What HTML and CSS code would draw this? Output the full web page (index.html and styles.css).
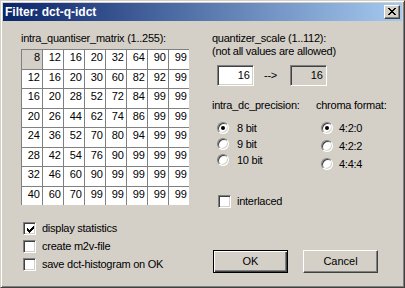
FILE: index.html
```html
<!DOCTYPE html>
<html lang="en">
<head>
  <meta charset="UTF-8">
  <title>Filter: dct-q-idct</title>
  <link rel="stylesheet" href="styles.css">
</head>
<body>
  <div class="window">
    <div class="titlebar">
      <span class="title">Filter: dct-q-idct</span>
      <span class="close-btn">
        <svg width="8" height="7" viewBox="0 0 8 7" shape-rendering="crispEdges">
          <path d="M0 0h2v1h-2zM6 0h2v1h-2zM1 1h2v1h-2zM5 1h2v1h-2zM2 2h4v1h-4zM3 3h2v1h-2zM2 4h4v1h-4zM1 5h2v1h-2zM5 5h2v1h-2zM0 6h2v1h-2zM6 6h2v1h-2z" fill="#000"/>
        </svg>
      </span>
    </div>

    <div class="dialog">
      <div class="col-left">
        <div class="label">intra_quantiser_matrix (1..255):</div>
        <div class="matrix">
          <div class="cell cell-first">8</div><div class="cell">12</div><div class="cell">16</div><div class="cell">20</div><div class="cell">32</div><div class="cell">64</div><div class="cell">90</div><div class="cell">99</div>
          <div class="cell">12</div><div class="cell">16</div><div class="cell">20</div><div class="cell">30</div><div class="cell">60</div><div class="cell">82</div><div class="cell">92</div><div class="cell">99</div>
          <div class="cell">16</div><div class="cell">20</div><div class="cell">28</div><div class="cell">52</div><div class="cell">72</div><div class="cell">84</div><div class="cell">99</div><div class="cell">99</div>
          <div class="cell">20</div><div class="cell">26</div><div class="cell">44</div><div class="cell">62</div><div class="cell">74</div><div class="cell">86</div><div class="cell">99</div><div class="cell">99</div>
          <div class="cell">24</div><div class="cell">36</div><div class="cell">52</div><div class="cell">70</div><div class="cell">80</div><div class="cell">94</div><div class="cell">99</div><div class="cell">99</div>
          <div class="cell">28</div><div class="cell">42</div><div class="cell">54</div><div class="cell">76</div><div class="cell">90</div><div class="cell">99</div><div class="cell">99</div><div class="cell">99</div>
          <div class="cell">32</div><div class="cell">46</div><div class="cell">60</div><div class="cell">90</div><div class="cell">99</div><div class="cell">99</div><div class="cell">99</div><div class="cell">99</div>
          <div class="cell">40</div><div class="cell">60</div><div class="cell">70</div><div class="cell">99</div><div class="cell">99</div><div class="cell">99</div><div class="cell">99</div><div class="cell">99</div>
        </div>

        <div class="options">
          <div class="check">
            <span class="box">
              <svg width="7" height="7" viewBox="0 0 7 7" shape-rendering="crispEdges"><path d="M6 0h1v1h-1zM5 1h2v1h-2zM0 2h1v1h-1zM4 2h3v1h-3zM0 3h2v1h-2zM3 3h3v1h-3zM0 4h5v1h-5zM1 5h3v1h-3zM2 6h1v1h-1z" fill="#000"/></svg>
            </span>
            display statistics
          </div>
          <div class="check"><span class="box"></span>create m2v-file</div>
          <div class="check"><span class="box"></span>save dct-histogram on OK</div>
        </div>
      </div>

      <div class="col-right">
        <div class="label">quantizer_scale (1..112):<br>(not all values are allowed)</div>
        <div class="scale-row">
          <div class="edit">16</div>
          <span class="arrow">--&gt;</span>
          <div class="edit edit-readonly">16</div>
        </div>

        <div class="groups">
          <div class="group group-dc">
            <div class="label">intra_dc_precision:</div>
            <div class="radio-list">
              <div class="radio-row"><span class="radio radio-on"></span>8 bit</div>
              <div class="radio-row"><span class="radio"></span>9 bit</div>
              <div class="radio-row"><span class="radio"></span>10 bit</div>
            </div>
          </div>
          <div class="group group-chroma">
            <div class="label">chroma format:</div>
            <div class="radio-list">
              <div class="radio-row"><span class="radio radio-on"></span>4:2:0</div>
              <div class="radio-row"><span class="radio"></span>4:2:2</div>
              <div class="radio-row"><span class="radio"></span>4:4:4</div>
            </div>
          </div>
        </div>

        <div class="check interlaced"><span class="box"></span>interlaced</div>

        <div class="buttons">
          <div class="button button-default">OK</div>
          <div class="button">Cancel</div>
        </div>
      </div>
    </div>
  </div>
</body>
</html>
```

FILE: styles.css
```css
body {
  margin: 0;
  font-family: 'Liberation Sans', Arial, sans-serif;
  font-size: 11px;
  line-height: 13px;
  letter-spacing: -0.25px;
  color: #000;
  background: #d4d0c8;
}
.window {
  width: 405px;
  height: 288px;
  box-sizing: border-box;
  padding: 2px;
  border: 1px solid;
  border-color: #d4d0c8 #404040 #404040 #d4d0c8;
  box-shadow: inset 1px 1px 0 #fff, inset -1px -1px 0 #808080;
  background: #d4d0c8;
  display: flex;
  flex-direction: column;
}
.titlebar {
  height: 18px;
  display: flex;
  align-items: center;
  justify-content: space-between;
  padding: 0 2px 0 2px;
  background: linear-gradient(to right, #0a246a, #a6caf0);
}
.title {
  color: #fff;
  font-weight: bold;
  font-size: 12px;
  letter-spacing: 0;
}
.close-btn {
  width: 16px;
  height: 14px;
  box-sizing: border-box;
  border: 1px solid;
  border-color: #fff #404040 #404040 #fff;
  box-shadow: inset -1px -1px 0 #808080;
  background: #d4d0c8;
  display: flex;
  align-items: center;
  justify-content: center;
  padding: 0 1px 1px 0;
}
.close-btn svg { display: block; }

.dialog {
  flex: 1;
  display: flex;
}
.col-left {
  width: 209px;
  box-sizing: border-box;
  padding: 11px 0 0 18px;
}
.label { white-space: nowrap; }

.matrix {
  margin-top: 4px;
  display: grid;
  grid-template-columns: repeat(8, 21px);
  grid-template-rows: 20px 19px 20px 19px 20px 19px 20px 19px;
  background: #fff;
  width: 168px;
}
.cell {
  border-top: 1px solid #808080;
  border-left: 1px solid #808080;
  padding: 1px 2px 0 0;
  text-align: right;
  letter-spacing: 0;
}
.cell-first { background: #d4d0c8; }

.options {
  margin-top: 15px;
  display: flex;
  flex-direction: column;
  gap: 1px;
  padding-left: 2px;
}
.check {
  height: 17px;
  display: flex;
  align-items: center;
  white-space: nowrap;
}
.box {
  width: 13px;
  height: 13px;
  box-sizing: border-box;
  border: 1px solid;
  border-color: #808080 #fff #fff #808080;
  box-shadow: inset 1px 1px 0 #404040, inset -1px -1px 0 #d4d0c8;
  background: #fff;
  margin-right: 6px;
  flex: none;
  display: flex;
  padding: 2px 0 0 2px;
}
.box svg { display: block; margin: 1px 0 0 1px; }

.col-right {
  flex: 1;
  display: flex;
  flex-direction: column;
  padding: 11px 0 12px 0;
}
.scale-row {
  margin-top: 7px;
  padding-left: 5px;
  display: flex;
  align-items: center;
}
.edit {
  width: 37px;
  height: 21px;
  box-sizing: border-box;
  border: 1px solid;
  border-color: #808080 #fff #fff #808080;
  box-shadow: inset 1px 1px 0 #404040, inset -1px -1px 0 #d4d0c8;
  background: #fff;
  text-align: right;
  padding: 3px 3px 0 0;
  letter-spacing: 0;
}
.edit-readonly { background: #d4d0c8; }
.arrow { margin: 0 13px 0 10px; }

.groups {
  margin-top: 13px;
  display: flex;
}
.group-dc { width: 104px; }
.radio-list {
  margin-top: 8px;
  padding-left: 5px;
}
.radio-row {
  height: 16px;
  display: flex;
  align-items: center;
}
.group-chroma .radio-list { margin-top: 7px; }
.group-chroma .radio-row { height: 18px; }
.radio {
  width: 12px;
  height: 12px;
  box-sizing: border-box;
  border-radius: 50%;
  border: 1px solid;
  border-color: #808080 #fff #fff #808080;
  box-shadow: inset 1px 1px 0 #404040, inset -1px -1px 0 #d4d0c8;
  background: #fff;
  margin-right: 8px;
  flex: none;
  display: flex;
  align-items: center;
  justify-content: center;
}
.group-chroma .radio { margin-right: 6px; }
.radio-on::after {
  content: "";
  width: 4px;
  height: 4px;
  border-radius: 50%;
  background: #000;
}

.interlaced {
  margin-top: 20px;
  padding-left: 6px;
}
.buttons {
  margin-top: auto;
  padding-left: 1px;
  display: flex;
  gap: 15px;
}
.button {
  width: 75px;
  height: 23px;
  box-sizing: border-box;
  border: 1px solid;
  border-color: #fff #404040 #404040 #fff;
  box-shadow: inset -1px -1px 0 #808080;
  display: flex;
  align-items: center;
  justify-content: center;
  letter-spacing: 0;
}
.button-default {
  border-color: #000;
  box-shadow: inset 1px 1px 0 #fff, inset -1px -1px 0 #404040, inset -2px -2px 0 #808080;
}
```
